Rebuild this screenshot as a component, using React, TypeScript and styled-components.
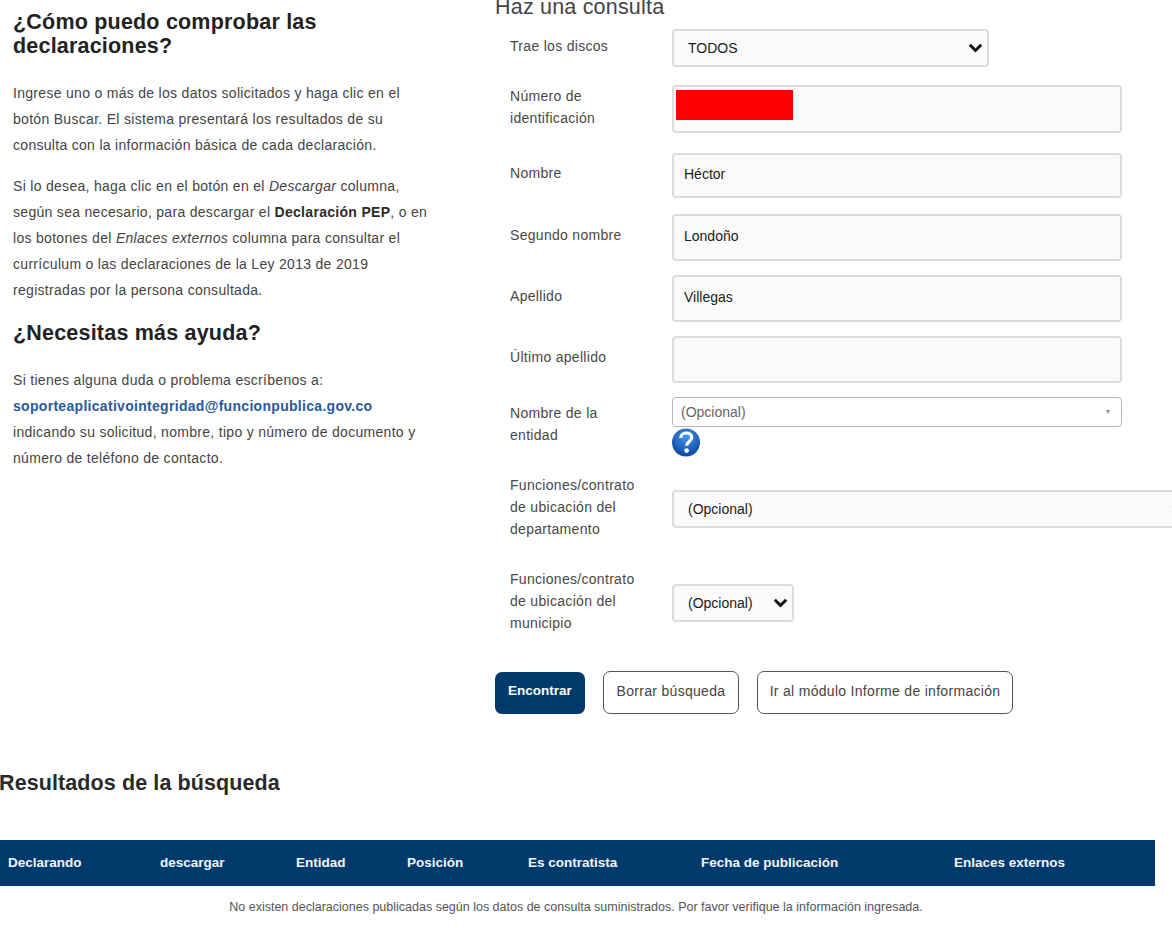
import React from 'react'
import styled, { createGlobalStyle } from 'styled-components'

const GlobalStyle = createGlobalStyle`
  html, body {
    margin: 0;
    padding: 0;
    background: #fff;
  }
  body {
    font-family: "Liberation Sans", Arial, sans-serif;
    color: #333;
  }
`

const Page = styled.div`
  width: 1172px;
  height: 933px;
  overflow: hidden;
`

const Top = styled.div`
  display: grid;
  grid-template-columns: 495px 1fr;
  height: 671px;
`

const Help = styled.aside`
  padding: 10px 0 0 13px;
`

const Heading = styled.h2<{ $top?: number }>`
  margin: ${(p) => p.$top ?? 0}px 0 0;
  width: 425px;
  font-size: 21.5px;
  line-height: 24px;
  font-weight: 700;
  letter-spacing: 0.2px;
  color: #222;
`

const Copy = styled.p<{ $top: number }>`
  margin: ${(p) => p.$top}px 0 0;
  width: 418px;
  font-size: 14px;
  line-height: 26px;
  letter-spacing: 0.3px;
  color: #444;

  strong {
    color: #2b2b2b;
  }
`

const Mail = styled.a`
  color: #2a5a9c;
  font-weight: 700;
  text-decoration: none;
`

const Query = styled.section`
  min-width: 0;
`

const QueryTitle = styled.h3`
  margin: -7px 0 0;
  height: 30px;
  font-size: 21.5px;
  line-height: 29px;
  font-weight: 400;
  color: #444;
  letter-spacing: 0.2px;
`

const Row = styled.div<{ $top: number }>`
  display: grid;
  grid-template-columns: 162px minmax(0, 1fr);
  align-items: center;
  margin-top: ${(p) => p.$top}px;
  padding-left: 15px;
`

const Label = styled.label<{ $lift?: boolean }>`
  padding-bottom: ${(p) => (p.$lift ? 6 : 4)}px;
  width: 135px;
  font-size: 14px;
  line-height: 22px;
  letter-spacing: 0.3px;
  color: #484848;
`

const fieldBase = `
  display: block;
  box-sizing: border-box;
  border: 2px solid #dcdcdc;
  border-radius: 4px;
  background: #fafafa;
  font-family: inherit;
  font-size: 14px;
  color: #1a1a1a;
  outline: none;
`

const TextField = styled.input<{ $h: number }>`
  ${fieldBase}
  height: ${(p) => p.$h}px;
  width: 450px;
  padding: 0 10px 3px;
`

const SelectWrap = styled.div<{ $w: number }>`
  position: relative;
  width: ${(p) => p.$w}px;
`

const Select = styled.select`
  ${fieldBase}
  appearance: none;
  height: 38px;
  width: 100%;
  padding: 0 8px 0 14px;
`

const Chevron = styled.svg`
  position: absolute;
  right: 6px;
  top: 14px;
  width: 15px;
  height: 10px;
  pointer-events: none;
`

const Redacted = styled.div`
  position: relative;
  width: 450px;

  &::after {
    content: '';
    position: absolute;
    left: 4px;
    top: 5px;
    width: 117px;
    height: 30px;
    background: #fe0000;
  }
`

const Combo = styled.div`
  display: flex;
  align-items: center;
  justify-content: space-between;
  box-sizing: border-box;
  width: 450px;
  height: 30px;
  padding: 0 11px 0 8px;
  border: 1.5px solid #b5b5b5;
  border-radius: 4px;
  font-size: 14px;
  color: #666;
`

const ComboCaret = styled.span`
  width: 0;
  height: 0;
  border-left: 2.5px solid transparent;
  border-right: 2.5px solid transparent;
  border-top: 4px solid #8a8a8a;
`

const HelpIcon = styled.svg`
  display: block;
  margin-top: 1px;
  width: 29px;
  height: 29px;
`

const Actions = styled.div`
  display: flex;
  align-items: flex-end;
  height: 43px;
  margin-left: 495px;
  gap: 18px;
`

const Button = styled.button<{ $primary?: boolean; $w: number }>`
  box-sizing: border-box;
  width: ${(p) => p.$w}px;
  height: ${(p) => (p.$primary ? 42 : 43)}px;
  padding: 0 0 ${(p) => (p.$primary ? 6 : 4)}px;
  border: ${(p) => (p.$primary ? '0' : '1.5px solid #555')};
  border-radius: 7px;
  background: ${(p) => (p.$primary ? '#003a6c' : '#fff')};
  color: ${(p) => (p.$primary ? '#fff' : '#444')};
  font-family: inherit;
  font-size: ${(p) => (p.$primary ? 13.5 : 14)}px;
  font-weight: ${(p) => (p.$primary ? 700 : 400)};
  letter-spacing: ${(p) => (p.$primary ? 0 : 0.3)}px;
`

const Results = styled.section`
  padding-top: 54px;
`

const ResultsTitle = styled.h2`
  margin: 0 0 0 -1px;
  font-size: 21.5px;
  line-height: 30px;
  font-weight: 700;
  letter-spacing: 0.1px;
  color: #2a2a2a;
`

const TableHead = styled.div`
  display: grid;
  grid-template-columns: 152px 136px 111px 121px 173px 253px 1fr;
  align-items: center;
  box-sizing: border-box;
  width: 1155px;
  height: 46px;
  margin-top: 42px;
  padding: 0 0 1px 8px;
  background: #003a6c;
  color: #f2f5f8;
  font-size: 13.5px;
  font-weight: 700;
`

const Empty = styled.p`
  margin: 12px 0 0;
  width: 1152px;
  font-size: 12.5px;
  line-height: 18px;
  text-align: center;
  color: #555;
`

const columns = ['Declarando', 'descargar', 'Entidad', 'Posición', 'Es contratista', 'Fecha de publicación', 'Enlaces externos']

function OptionSelect({ width, value }: { width: number; value: string }) {
  return (
    <SelectWrap $w={width}>
      <Select defaultValue={value}>
        <option>{value}</option>
      </Select>
      <Chevron viewBox="0 0 15 10" aria-hidden="true">
        <path d="M1.8 1.8 7.5 7.5 13.2 1.8" fill="none" stroke="#111" strokeWidth="3" />
      </Chevron>
    </SelectWrap>
  )
}

export default function App() {
  return (
    <Page>
      <GlobalStyle />
      <Top>
        <Help>
          <Heading>¿Cómo puedo comprobar las declaraciones?</Heading>
          <Copy $top={22}>
            Ingrese uno o más de los datos solicitados y haga clic en el botón Buscar. El sistema presentará los
            resultados de su consulta con la información básica de cada declaración.
          </Copy>
          <Copy $top={15}>
            Si lo desea, haga clic en el botón en el <em>Descargar</em> columna, según sea necesario, para descargar
            el <strong>Declaración PEP</strong>, o en los botones del <em>Enlaces externos</em> columna para consultar
            el currículum o las declaraciones de la Ley 2013 de 2019 registradas por la persona consultada.
          </Copy>
          <Heading $top={18}>¿Necesitas más ayuda?</Heading>
          <Copy $top={22}>
            Si tienes alguna duda o problema escríbenos a: <Mail href="#">soporteaplicativointegridad@funcionpublica.gov.co</Mail>{' '}
            indicando su solicitud, nombre, tipo y número de documento y número de teléfono de contacto.
          </Copy>
        </Help>
        <Query>
          <QueryTitle>Haz una consulta</QueryTitle>
          <Row $top={6}>
            <Label>Trae los discos</Label>
            <OptionSelect width={317} value="TODOS" />
          </Row>
          <Row $top={18}>
            <Label>Número de identificación</Label>
            <Redacted>
              <TextField $h={48} readOnly />
            </Redacted>
          </Row>
          <Row $top={20}>
            <Label $lift>Nombre</Label>
            <TextField $h={45} defaultValue="Héctor" />
          </Row>
          <Row $top={16}>
            <Label $lift>Segundo nombre</Label>
            <TextField $h={47} defaultValue="Londoño" />
          </Row>
          <Row $top={14}>
            <Label $lift>Apellido</Label>
            <TextField $h={47} defaultValue="Villegas" />
          </Row>
          <Row $top={14}>
            <Label $lift>Último apellido</Label>
            <TextField $h={47} />
          </Row>
          <Row $top={14}>
            <Label $lift>Nombre de la entidad</Label>
            <div>
              <Combo>
                (Opcional)
                <ComboCaret />
              </Combo>
              <HelpIcon viewBox="0 0 29 29" aria-hidden="true">
                <defs>
                  <radialGradient id="helpFill" cx="50%" cy="30%" r="75%">
                    <stop offset="0%" stopColor="#3f97ea" />
                    <stop offset="100%" stopColor="#0a3f96" />
                  </radialGradient>
                </defs>
                <circle cx="14" cy="14.5" r="14" fill="url(#helpFill)" />
                <path
                  d="M8.8 10c0-3 2.3-5 5.5-5s5.4 1.9 5.4 4.6c0 3.8-5 4.2-5 8.2"
                  fill="none"
                  stroke="#fff"
                  strokeWidth="3.2"
                />
                <circle cx="14.6" cy="22.6" r="2.3" fill="#fff" />
              </HelpIcon>
            </div>
          </Row>
          <Row $top={17}>
            <Label>Funciones/contrato de ubicación del departamento</Label>
            <OptionSelect width={520} value="(Opcional)" />
          </Row>
          <Row $top={24}>
            <Label>Funciones/contrato de ubicación del municipio</Label>
            <OptionSelect width={122} value="(Opcional)" />
          </Row>
        </Query>
      </Top>
      <Actions>
        <Button $primary $w={90}>Encontrar</Button>
        <Button $w={136}>Borrar búsqueda</Button>
        <Button $w={256}>Ir al módulo Informe de información</Button>
      </Actions>
      <Results>
        <ResultsTitle>Resultados de la búsqueda</ResultsTitle>
        <TableHead>
          {columns.map((c) => (
            <span key={c}>{c}</span>
          ))}
        </TableHead>
        <Empty>No existen declaraciones publicadas según los datos de consulta suministrados. Por favor verifique la información ingresada.</Empty>
      </Results>
    </Page>
  )
}
